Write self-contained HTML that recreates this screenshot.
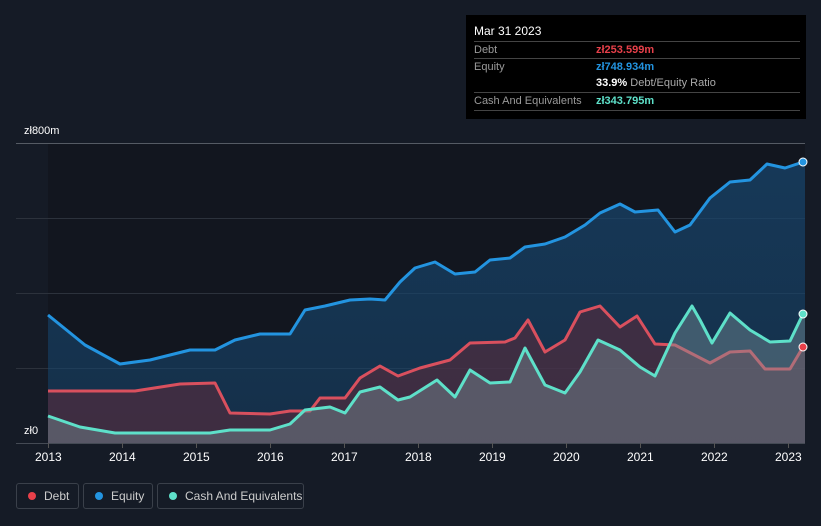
<!DOCTYPE html>
<html><head><meta charset="utf-8"><style>
html,body{margin:0;padding:0;background:#151b26;width:821px;height:526px;overflow:hidden;font-family:"Liberation Sans",sans-serif}
.tip{position:absolute;left:466px;top:15px;width:340px;height:104px;background:#000;color:#fff;font-size:11px}
.tip .row{position:absolute;left:8px;width:326px;border-top:1px solid #444;height:17px;line-height:17px}
.tip .l{color:#9a9a9a;position:absolute;left:0}
.tip .v{position:absolute;left:122px;font-weight:bold}
.leg{position:absolute;top:483px;height:26px;border:1px solid #3a404a;border-radius:3px;color:#ccc;font-size:12px;line-height:25px;box-sizing:border-box}
.leg i{position:absolute;left:11px;top:8px;width:8px;height:8px;border-radius:50%}
.leg span{position:absolute;left:27px}
.ax{position:absolute;color:#fff;font-size:11px}
</style></head><body>
<svg width="821" height="526" style="position:absolute;left:0;top:0">
<rect x="48" y="143" width="757" height="300" fill="#12161f"/>
<g stroke="#2c323c" stroke-width="1">
<line x1="16" y1="143.5" x2="805" y2="143.5" stroke="#555b64"/>
<line x1="16" y1="218.5" x2="805" y2="218.5"/>
<line x1="16" y1="293.5" x2="805" y2="293.5"/>
<line x1="16" y1="368.5" x2="805" y2="368.5"/>
<line x1="16" y1="443.5" x2="805" y2="443.5" stroke="#444a54"/>
</g>
<g stroke="#555" stroke-width="1">
<line x1="48.5" y1="443" x2="48.5" y2="448"/><line x1="122.5" y1="443" x2="122.5" y2="448"/><line x1="196.5" y1="443" x2="196.5" y2="448"/><line x1="270.5" y1="443" x2="270.5" y2="448"/><line x1="344.5" y1="443" x2="344.5" y2="448"/><line x1="418.5" y1="443" x2="418.5" y2="448"/><line x1="492.5" y1="443" x2="492.5" y2="448"/><line x1="566.5" y1="443" x2="566.5" y2="448"/><line x1="640.5" y1="443" x2="640.5" y2="448"/><line x1="714.5" y1="443" x2="714.5" y2="448"/><line x1="788.5" y1="443" x2="788.5" y2="448"/>
</g>
<defs>
<linearGradient id="ge" x1="0" y1="0" x2="0" y2="1"><stop offset="0" stop-color="#17446b" stop-opacity=".75"/><stop offset="1" stop-color="#17446b" stop-opacity=".55"/></linearGradient>
</defs>
<polygon fill="url(#ge)" points="48,443 48,315 85,345 120,364 150,360 190,350 215,350 235,340 260,334 290,334 305,310 325,306 350,300 370,299 385,300 400,282 415,268 435,262 455,274 475,272 490,260 510,258 525,247 545,244 565,237 585,225 600,213 620,204 635,212 658,210 675,232 690,225 710,198 730,182 750,180 767,164 785,168 803,162 805,162 805,443"/>
<polyline fill="none" stroke="#2394e0" stroke-width="3" stroke-linejoin="round" points="48,315 85,345 120,364 150,360 190,350 215,350 235,340 260,334 290,334 305,310 325,306 350,300 370,299 385,300 400,282 415,268 435,262 455,274 475,272 490,260 510,258 525,247 545,244 565,237 585,225 600,213 620,204 635,212 658,210 675,232 690,225 710,198 730,182 750,180 767,164 785,168 803,162"/>
<polygon fill="#5a2c3c" fill-opacity=".6" points="48,443 48,391 135,391 180,384 215,383 230,413 270,414 290,411 310,411 320,398 345,398 360,378 380,366 398,376 420,368 450,360 470,343 505,342 515,338 528,320 545,352 565,340 580,312 600,306 620,327 637,316 655,344 675,345 710,363 730,352 750,351 765,369 790,369 803,347 805,347 805,443"/>
<polyline fill="none" stroke="#d9505e" stroke-width="3" stroke-linejoin="round" points="48,391 135,391 180,384 215,383 230,413 270,414 290,411 310,411 320,398 345,398 360,378 380,366 398,376 420,368 450,360 470,343 505,342 515,338 528,320 545,352 565,340 580,312 600,306 620,327 637,316 655,344 675,345 710,363 730,352 750,351 765,369 790,369 803,347"/>
<polygon fill="#7d949a" fill-opacity=".42" points="48,443 48,416 80,427 115,433 210,433 230,430 270,430 290,424 305,410 330,407 345,413 360,392 380,387 398,400 410,397 437,380 455,397 470,370 490,383 510,382 525,348 545,385 565,393 580,372 598,340 620,350 640,367 655,376 675,333 692,306 700,320 712,343 730,313 750,330 770,342 790,341 803,314 805,314 805,443"/>
<polyline fill="none" stroke="#5ee0c9" stroke-width="3" stroke-linejoin="round" points="48,416 80,427 115,433 210,433 230,430 270,430 290,424 305,410 330,407 345,413 360,392 380,387 398,400 410,397 437,380 455,397 470,370 490,383 510,382 525,348 545,385 565,393 580,372 598,340 620,350 640,367 655,376 675,333 692,306 700,320 712,343 730,313 750,330 770,342 790,341 803,314"/>
<circle cx="803" cy="162" r="4" fill="#2394e0" stroke="#fff" stroke-width="1"/>
<circle cx="803" cy="314" r="4" fill="#5ee0c9" stroke="#fff" stroke-width="1"/>
<circle cx="803" cy="347" r="4" fill="#e8404a" stroke="#fff" stroke-width="1"/>
</svg>
<div class="ax" style="left:24px;top:125px">zł800m</div>
<div class="ax" style="left:24px;top:425px">zł0</div>
<div class="ax" style="left:35px;top:450px;font-size:12px">2013</div>
<div class="ax" style="left:109px;top:450px;font-size:12px">2014</div>
<div class="ax" style="left:183px;top:450px;font-size:12px">2015</div>
<div class="ax" style="left:257px;top:450px;font-size:12px">2016</div>
<div class="ax" style="left:331px;top:450px;font-size:12px">2017</div>
<div class="ax" style="left:405px;top:450px;font-size:12px">2018</div>
<div class="ax" style="left:479px;top:450px;font-size:12px">2019</div>
<div class="ax" style="left:553px;top:450px;font-size:12px">2020</div>
<div class="ax" style="left:627px;top:450px;font-size:12px">2021</div>
<div class="ax" style="left:701px;top:450px;font-size:12px">2022</div>
<div class="ax" style="left:775px;top:450px;font-size:12px">2023</div>
<div class="tip">
<div style="position:absolute;left:8px;top:9px;font-size:12px">Mar 31 2023</div>
<div class="row" style="top:26px"><span class="l">Debt</span><span class="v" style="color:#e8404a">zł253.599m</span></div>
<div class="row" style="top:43px"><span class="l">Equity</span><span class="v" style="color:#2394e0">zł748.934m</span></div>
<div style="position:absolute;left:130px;top:60px;line-height:17px"><b>33.9%</b> <span style="color:#aaa">Debt/Equity Ratio</span></div>
<div class="row" style="top:77px;border-bottom:1px solid #444"><span class="l">Cash And Equivalents</span><span class="v" style="color:#5ee0c9">zł343.795m</span></div>
</div>
<div class="leg" style="left:16px;width:63px"><i style="background:#e8404a"></i><span>Debt</span></div>
<div class="leg" style="left:83px;width:70px"><i style="background:#2394e0"></i><span>Equity</span></div>
<div class="leg" style="left:157px;width:147px"><i style="background:#5ee0c9"></i><span>Cash And Equivalents</span></div>
</body></html>
